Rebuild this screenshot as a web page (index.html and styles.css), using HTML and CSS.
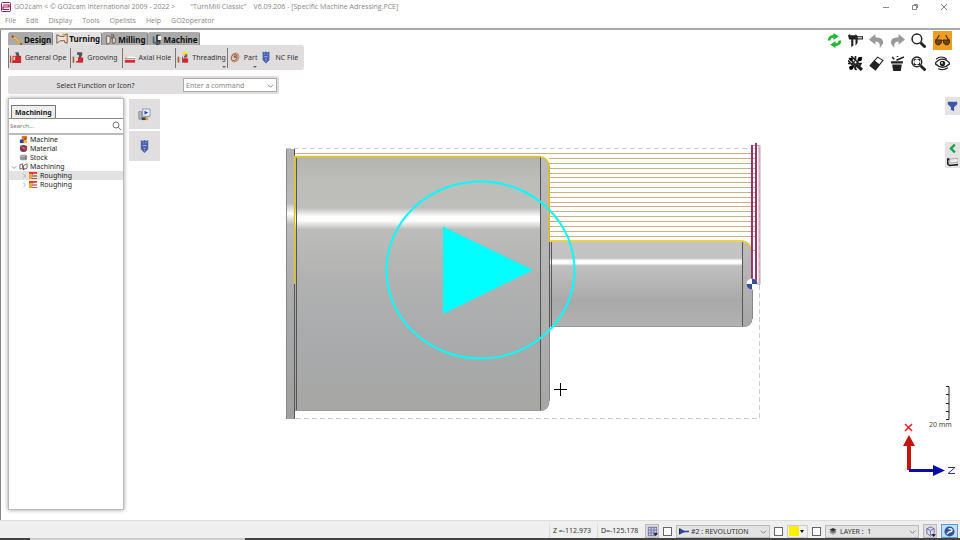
FILE: index.html
```html
<!DOCTYPE html>
<html lang="en">
<head>
<meta charset="utf-8">
<meta name="viewport" content="width=device-width, initial-scale=1">
<title>GO2cam</title>
<link rel="stylesheet" href="styles.css">
</head>
<body>

<!-- icon sprite -->
<svg class="sprite" aria-hidden="true">
  <symbol id="i-lathe" viewBox="0 0 14 14"><path fill="#d9b79c" d="M0 6h4v7H0z"/><path fill="#8b2f22" d="M0 5h1v8H0z"/><path fill="#d8242f" d="M3 5h10v8H3z"/><path fill="#f5d6c8" d="M4 6h2v4H4z"/><path fill="#555" d="M6 1h4l1 5H8z"/><path fill="#9c1c24" d="M2 12h11v1H2z"/></symbol>
  <symbol id="i-groove" viewBox="0 0 14 14"><path fill="#d9b79c" d="M0 6h4v7H0z"/><path fill="#7c4a3a" d="M1 6h1v7H1z"/><path fill="#d8242f" d="M5 7h8v6H5z"/><path fill="#f7e9e2" d="M4 7h3v4H4z"/><path fill="#555" d="M6 1h6v3l-2 4H8V4H6z"/></symbol>
  <symbol id="i-axial" viewBox="0 0 14 14"><path fill="#f2cdbd" d="M1 4h4v4H1z"/><path fill="#fff" d="M4 6h9v3H4z"/><path fill="#8d6e66" d="M1 8h12v1H1z"/><path fill="#d8242f" d="M1 10h12v3H1z"/></symbol>
  <symbol id="i-thread" viewBox="0 0 14 14"><path fill="#d9b79c" d="M0 6h4v7H0z"/><path fill="#7c4a3a" d="M1 6h1v7H1zM6 6h1v7H6zM9 6h1v7H9z"/><path fill="#d8242f" d="M7 8h6v5H7z"/><path fill="#666" d="M8 3h4v4H8z"/><path stroke="#f2e600" stroke-width="1.5" d="M9 0v5M6 2h7"/></symbol>
  <symbol id="i-part" viewBox="0 0 14 14"><ellipse cx="7" cy="7" rx="5" ry="6" fill="#c79a7e" transform="rotate(25 7 7)"/><ellipse cx="6" cy="7" rx="3" ry="4" fill="#e6c8b4" stroke="#8f6650" transform="rotate(25 6 7)"/><circle cx="7" cy="6" r="1.5" fill="#8f6650"/></symbol>
  <symbol id="i-nc" viewBox="0 0 14 14"><path fill="#4a62ae" d="M3 0l2 1 2-1 2 1 2-1v10l-4 4-4-4z"/><path stroke="#aebce6" d="M5 3h1M8 3h1M5 6h4M6 9h2M7 11v1"/></symbol>
  <symbol id="i-pencil" viewBox="0 0 14 14"><path stroke="#e0982e" stroke-width="3" d="M3 3l8 8"/><path stroke="#fbd77d" d="M3 3l7 7"/><path fill="#555" d="M10 12l3 1-1-3z"/><path stroke="#b03a2e" stroke-width="2" d="M1 2l2 2"/></symbol>
  <symbol id="i-turn" viewBox="0 0 14 14"><path fill="#f4e2d4" stroke="#6b4636" d="M1 2l4 2h5V2l3-1v11l-3-1V9H5l-4 3z"/><path stroke="#d9b12b" stroke-width="2" d="M8 1l3 3"/></symbol>
  <symbol id="i-mill" viewBox="0 0 14 14"><path fill="#f4ece4" stroke="#5c514c" d="M2 2l4 1v7l-4 2zM9 4l3 1v5l-3 1z"/><path stroke="#5c514c" d="M8 0v6M10 0v4"/></symbol>
  <symbol id="i-machine" viewBox="0 0 14 14"><path fill="#333" d="M6 1h5v10l-3 2H6z"/><path fill="#eee" d="M8 2h4v5H8z"/><path fill="#567" d="M2 3h2v8H2zM4 9h6v3H4z"/></symbol>
  <symbol id="i-refresh" viewBox="0 0 14 14"><path fill="none" stroke="#20b832" stroke-width="2.500" d="M2 7q0-4 5-4M12 7q0 4-5 4"/><path fill="#20b832" d="M6 0l5 3-5 3.500zM8 14l-5-3 5-3.500z"/></symbol>
  <symbol id="i-caliper" viewBox="0 0 14 14"><path fill="#222" d="M0 2l2-1v1h5V1l2 2h5v3H9v3L7 12V6H5v6L3 13V6H1z"/><path stroke="#fff" d="M9 4.500h4"/></symbol>
  <symbol id="i-undo" viewBox="0 0 14 14"><path fill="#999" d="M0 6l6-5v3q8 0 7 6l-3 4q1-6-4-6v3z"/></symbol>
  <symbol id="i-redo" viewBox="0 0 14 14"><path fill="#999" d="M14 6L8 1v3Q0 4 1 10l3 4q-1-6 4-6v3z"/></symbol>
  <symbol id="i-zoom" viewBox="0 0 14 14"><circle cx="5.5" cy="5.5" r="4.5" fill="#fff" stroke="#222" stroke-width="1.4"/><path stroke="#222" stroke-width="2.6" d="M9 9l4.500 4.500"/></symbol>
  <symbol id="i-fit" viewBox="0 0 14 14"><circle cx="5.500" cy="5.500" r="4.500" fill="#fff" stroke="#222" stroke-width="1.400"/><path fill="none" stroke="#222" d="M3 5V3h2M6 3h2v2M8 6v2H6M5 8H3V6"/><path stroke="#222" stroke-width="2.600" d="M9 9l4.500 4.500"/></symbol>
  <symbol id="i-glasses" viewBox="0 0 14 14"><path fill="none" stroke="#4a2a00" d="M1 7l3-5M13 7l-3-5M5 7h4"/><path fill="#70480c" stroke="#4a2a00" d="M0 6.500h6V9L4 11H2L.5 9zM8 6.500h6L13.500 9 12 11h-2L8 9z"/></symbol>
  <symbol id="i-tools" viewBox="0 0 14 14"><path fill="none" stroke="#222" stroke-width="1.500" d="M1 2l11 11M13 1L2 12M7 0v13M0 7h13M3 0l9 9M0 4l8 9"/><circle cx="3" cy="3" r="1.500"/><circle cx="11" cy="3" r="2"/><circle cx="3" cy="11" r="2"/><path stroke="#222" stroke-width="3" d="M8 8l5 5"/><circle cx="7" cy="6" r="1.500" fill="#fff" stroke="#222"/></symbol>
  <symbol id="i-eraser" viewBox="0 0 14 14"><path fill="#fff" stroke="#222" d="M1 9l7-8 5 3-7 9z"/><path fill="#222" d="M1 9l4-5 5 4-4 5z"/></symbol>
  <symbol id="i-magic" viewBox="0 0 14 14"><path fill="#222" d="M1 5h11v2H1zM2 8h9l-1 6H3z"/><path stroke="#222" stroke-width="1.500" d="M6 4l7-3M2 1l2 2M7 0v1"/></symbol>
  <symbol id="i-eye" viewBox="0 0 14 14"><path fill="#fff" stroke="#222" stroke-width="1.200" d="M0 7q7-8 14 0-7 7-14 0z"/><circle cx="7" cy="7" r="2.500" fill="#222"/><circle cx="6.500" cy="6.500" r=".8" fill="#fff"/><path fill="none" stroke="#222" d="M1 3q5-4 10 0M3 12q5 2 9-1"/></symbol>
  <symbol id="i-search" viewBox="0 0 10 10"><circle cx="4" cy="4" r="3" fill="none" stroke="#777"/><path stroke="#777" d="M6 6l3 3"/></symbol>
  <symbol id="i-t-machine" viewBox="0 0 10 10"><path fill="#d87a1c" d="M3 1h6v4H3z"/><path fill="#333f8c" d="M1 5h5v4H1z"/><path fill="#c9302c" d="M6 3h2v3H6z"/><path fill="#f3bd2a" d="M5 6h4v3H5z"/></symbol>
  <symbol id="i-t-material" viewBox="0 0 10 10"><circle cx="5" cy="5" r="4" fill="#4c4c5c"/><path fill="#d22b35" d="M1 2h4L4 6zM5 6l4-5v4L7 9z"/><path fill="#ddd" d="M4 4h2v1H4z"/></symbol>
  <symbol id="i-t-stock" viewBox="0 0 10 10"><rect x="1" y="2" width="8" height="6" rx="2" fill="#999"/><path fill="#c8c8c8" d="M2 3h6v1H2z"/><path fill="#666" d="M7 3h1v4H7z"/></symbol>
  <symbol id="i-t-machining" viewBox="0 0 10 10"><path fill="#fff" stroke="#6d5f5f" d="M1 3l3-1v5l-3 1zM5 4l4-2v5L5 8z"/><path fill="#a33" d="M4 7h2v2H4z"/></symbol>
  <symbol id="i-t-rough" viewBox="0 0 10 10"><path fill="#d8343a" d="M0 1h9v2H5L3 5H0z"/><path fill="#f0a53a" d="M0 3h3l2 2-2 4H0z"/><path fill="#9a2b20" d="M4 5h5v1H4zM3 8h6v1H3z"/></symbol>
  <symbol id="i-sim" viewBox="0 0 14 14"><path fill="#bbb" stroke="#888" d="M1 4h3v8H1z"/><path fill="#e9edfb" stroke="#8592ba" d="M5 1h8v8H5z"/><path fill="#2b409c" d="M7 3l4 2-4 2z"/><path fill="#444" d="M4 10h5v3H4z"/><path fill="#dda23b" d="M8 10h3v3H8z"/></symbol>
  <symbol id="i-chev" viewBox="0 0 8 8"><path fill="none" stroke="#777" d="M1 3l3 3 3-3"/></symbol>
  <symbol id="i-right" viewBox="0 0 8 8"><path fill="none" stroke="#999" d="M3 1l3 3-3 3"/></symbol>
  <symbol id="i-funnel" viewBox="0 0 14 14"><path fill="#4054a4" d="M1 1h12v3L9 8v5L5 11V8L1 4z"/></symbol>
  <symbol id="i-back" viewBox="0 0 14 14"><path fill="none" stroke="#17a34a" stroke-width="3" d="M10 2L5 7l5 5"/></symbol>
  <symbol id="i-block" viewBox="0 0 14 14"><path fill="#eee" stroke="#999" d="M3 4l11-1v5L4 9z"/><path fill="none" stroke="#222" stroke-width="2" d="M3 4H1v6l2 2 11-1"/></symbol>
  <symbol id="i-grid" viewBox="0 0 12 12"><path fill="#c9c9dc" d="M1 1h10v10H1z"/><path stroke="#7777aa" d="M1 1.500h10M1 4.500h10M1 7.500h10M1 10.500h8M1.500 1v10M4.500 1v10M7.500 1v10M10.500 1v8"/><path fill="#111" d="M7 8h5l-2.500 3z"/></symbol>
  <symbol id="i-plane" viewBox="0 0 12 10"><path fill="#223" d="M0 1l3 1v5L0 9z"/><path fill="#284c9c" d="M1 2l6 2h5v2H7L1 8z"/></symbol>
  <symbol id="i-layer" viewBox="0 0 10 10"><path fill="#aaa" d="M1 6l4-2 4 2-4 3z"/><path fill="#777" d="M1 5l4-2 4 2-4 2z"/><path fill="#333" d="M1 3l4-2 4 2-4 2z"/></symbol>
  <symbol id="i-cube" viewBox="0 0 12 12"><path fill="#dcdcf0" stroke="#6969a6" d="M2 3l4-2 4 2v5l-4 3-4-3zM2 3l4 2 4-2M6 5v5"/><path fill="#111" d="M7 9h5l-2.500 3z"/></symbol>
  <symbol id="i-help" viewBox="0 0 12 12"><circle cx="6" cy="6" r="5.500" fill="#31529c"/><path fill="none" stroke="#fff" stroke-width="1.500" d="M3 9l3-3M5 3h2q3 1 1 3L5 7"/></symbol>
</svg>

<header>
  <div class="titlebar">
    <svg class="logo" viewBox="0 0 10 10"><rect x=".5" y=".5" width="9" height="9" rx="1" fill="#fff" stroke="#9c1c46"/><path fill="none" stroke="#9c1c46" stroke-width="1.200" d="M2 3h6v2H2v2.500h6"/></svg>
    <span class="app">GO2cam &lt; © GO2cam International 2009 - 2022 &gt;</span>
    <span class="config">"TurnMill Classic"</span>
    <span>V6.09.206 - [Specific Machine Adressing.PCE]</span>
    <div class="window-buttons">
      <button aria-label="Minimize"><svg viewBox="0 0 8 8"><path stroke="#888" d="M1 4.500h6"/></svg></button>
      <button aria-label="Restore"><svg viewBox="0 0 8 8"><path fill="none" stroke="#888" d="M1.500 2.500h4v4h-4zM3 1.500h3.500V5"/></svg></button>
      <button aria-label="Close"><svg viewBox="0 0 8 8"><path stroke="#888" d="M1 1l6 6M7 1L1 7"/></svg></button>
    </div>
  </div>
  <nav class="menu">
    <a href="#">File</a><a href="#">Edit</a><a href="#">Display</a><a href="#">Tools</a><a href="#">Opelists</a><a href="#">Help</a><a href="#">GO2operator</a>
  </nav>
</header>

<main>
  <!-- part view -->
  <svg class="viewport" viewBox="0 30 960 490" role="img" aria-label="Turned part">
    <defs>
      <linearGradient id="big" x1="0" y1="0" x2="0" y2="1">
        <stop offset="0" stop-color="#b3b3b0"/><stop offset=".1" stop-color="#bdbdba"/><stop offset=".2" stop-color="#bebebc"/>
        <stop offset=".235" stop-color="#fff"/><stop offset=".25" stop-color="#fff"/><stop offset=".285" stop-color="#bcbcba"/>
        <stop offset=".5" stop-color="#b1b1b1"/><stop offset=".75" stop-color="#a8aaab"/><stop offset="1" stop-color="#a7a7a4"/>
      </linearGradient>
      <linearGradient id="edge" x1="0" y1="0" x2="0" y2="1">
        <stop offset="0" stop-color="#b0b0b0"/><stop offset=".2" stop-color="#bababa"/><stop offset=".24" stop-color="#fff"/>
        <stop offset=".28" stop-color="#b9b9b9"/><stop offset=".6" stop-color="#a9a9a9"/><stop offset="1" stop-color="#a0a0a0"/>
      </linearGradient>
      <linearGradient id="small" x1="0" y1="0" x2="0" y2="1">
        <stop offset="0" stop-color="#c4c4c4"/><stop offset=".19" stop-color="#c2c2c2"/><stop offset=".22" stop-color="#fff"/>
        <stop offset=".25" stop-color="#fff"/><stop offset=".28" stop-color="#c0c0c0"/><stop offset=".7" stop-color="#a9a9a9"/><stop offset="1" stop-color="#b2b2b2"/>
      </linearGradient>
      <linearGradient id="side" x1="0" y1="0" x2="0" y2="1">
        <stop offset="0" stop-color="#bcbcbc"/><stop offset=".5" stop-color="#b2b2b2"/><stop offset="1" stop-color="#a6a6a6"/>
      </linearGradient>
    </defs>
    <path class="stock" d="M286 148.500h474M759.500 149v269.500H295"/>
    <path class="passes" d="M295 153.500h461M549 158.500h207M549 163.500h207M549 168.500h207M549 173.500h207M549 177.500h207M549 182.500h207M549 187.500h207M549 192.500h207M549 197.500h207M549 202.500h207M549 206.500h207M549 211.500h207M549 216.500h207M549 221.500h207M549 226.500h207M549 231.500h207M549 236.500h207M549 250.500h206"/>
    <path fill="url(#edge)" d="M286 149h9v270h-9z"/>
    <path fill="url(#big)" d="M295 157h245v254H295z"/>
    <path fill="url(#side)" d="M540 157q9 1 9 10v234q0 9-9 10z"/>
    <path fill="url(#small)" d="M550 242h193v85H550z"/>
    <path fill="url(#side)" d="M743 242q9 2 9 10v66q0 8-9 9z"/>
    <path fill="none" stroke="#888" d="M286.500 149v270M549.500 166v235M752.500 252v67"/>
    <path fill="none" stroke="#555" d="M294.500 149v270M296.500 158v253M540.500 157v254M549.500 242v85M551.500 242v85M742.500 242v85"/>
    <path fill="none" stroke="#999" d="M296 410.500h244q9 0 9-9M552 326.500h191q9 0 9-8"/>
    <path fill="none" stroke="#e3c51b" stroke-width="1.500" d="M294.500 284V156.500H540q9 2 9 10v74.500h194q8 2 9 11"/>
    <path fill="none" stroke="#c7a0ae" d="M752 145.500h8v139h-8M759 145v140"/>
    <path stroke="#963668" stroke-width="2" d="M752 145v135M756 143v140"/>
    <circle cx="752" cy="284" r="5.500" fill="#fff"/>
    <path fill="#3b4d95" d="M752 284h5.500a5.500 5.500 0 0 1-5.500 5.500zM752 284h-5.500a5.500 5.500 0 0 1 5.500-5.500z" transform="rotate(90 752 284)"/>
    <ellipse cx="480.500" cy="270" rx="94" ry="88.500" fill="none" stroke="#0ff" stroke-width="2"/>
    <path fill="#0ff" d="M443 226.500L533 270l-90 44z"/>
    <path stroke="#000" d="M554 389.500h13M560.500 383v13"/>
    <path fill="none" stroke="#222" d="M946 386.500h3v33h-3M946 394.500h3M946 403.500h3M946 411.500h3"/>
    <text class="scale" x="929" y="427">20 mm</text>
    <path fill="#c4150c" d="M907 470v-24h-4l6-11 6 11h-4v24z"/>
    <path fill="#0b0ba8" d="M909 469h24v-4l12 5.500-12 5.500v-4h-24z"/>
    <path fill="none" stroke="#d22" stroke-width="1.500" d="M905 424l7 7M912 424l-7 7"/>
    <path fill="none" stroke="#33a" d="M948 467.500h7l-7 6h7"/>
  </svg>

  <section class="left">
    <div class="tabs">
      <button><svg><use href="#i-pencil"/></svg>Design</button>
      <button class="active"><svg><use href="#i-turn"/></svg>Turning</button>
      <button><svg><use href="#i-mill"/></svg>Milling</button>
      <button><svg><use href="#i-machine"/></svg>Machine</button>
    </div>
    <div class="ribbon">
      <button><svg><use href="#i-lathe"/></svg>General Ope</button>
      <button><svg><use href="#i-groove"/></svg>Grooving</button>
      <button><svg><use href="#i-axial"/></svg>Axial Hole</button>
      <button class="more"><svg><use href="#i-thread"/></svg>Threading</button>
      <button class="more"><svg><use href="#i-part"/></svg>Part</button>
      <button><svg><use href="#i-nc"/></svg>NC File</button>
    </div>
    <div class="prompt">
      <label for="command">Select Function or Icon?</label>
      <div class="combo"><select id="command"><option>Enter a command</option></select><svg><use href="#i-chev"/></svg></div>
    </div>
    <div class="columns">
      <aside class="panel">
        <div class="panel-head"><button>Machining</button></div>
        <div class="search"><input type="text" placeholder="Search..." aria-label="Search"><svg><use href="#i-search"/></svg></div>
        <ul class="tree">
          <li><svg><use href="#i-t-machine"/></svg>Machine</li>
          <li><svg><use href="#i-t-material"/></svg>Material</li>
          <li><svg><use href="#i-t-stock"/></svg>Stock</li>
          <li class="open"><svg class="arrow"><use href="#i-chev"/></svg><svg><use href="#i-t-machining"/></svg>Machining</li>
          <li class="child selected"><svg class="arrow"><use href="#i-right"/></svg><svg><use href="#i-t-rough"/></svg>Roughing</li>
          <li class="child"><svg class="arrow"><use href="#i-right"/></svg><svg><use href="#i-t-rough"/></svg>Roughing</li>
        </ul>
      </aside>
      <div class="side-buttons">
        <button aria-label="Simulation"><svg><use href="#i-sim"/></svg></button>
        <button aria-label="NC File"><svg><use href="#i-nc"/></svg></button>
      </div>
    </div>
  </section>

  <section class="right">
    <div class="view-tools">
      <button aria-label="Refresh"><svg><use href="#i-refresh"/></svg></button>
      <button aria-label="Measure"><svg><use href="#i-caliper"/></svg></button>
      <button aria-label="Undo"><svg><use href="#i-undo"/></svg></button>
      <button aria-label="Redo"><svg><use href="#i-redo"/></svg></button>
      <button aria-label="Zoom"><svg><use href="#i-zoom"/></svg></button>
      <button class="on" aria-label="View"><svg><use href="#i-glasses"/></svg></button>
      <button class="second" aria-label="Tools"><svg><use href="#i-tools"/></svg></button>
      <button aria-label="Erase"><svg><use href="#i-eraser"/></svg></button>
      <button aria-label="Magic"><svg><use href="#i-magic"/></svg></button>
      <button aria-label="Zoom all"><svg><use href="#i-fit"/></svg></button>
      <button class="last" aria-label="Show"><svg><use href="#i-eye"/></svg></button>
    </div>
    <div class="dock">
      <button class="filter" aria-label="Filter"><svg><use href="#i-funnel"/></svg></button>
      <button aria-label="Back"><svg><use href="#i-back"/></svg></button>
      <button aria-label="Stock"><svg><use href="#i-block"/></svg></button>
    </div>
  </section>
</main>

<footer>
  <span class="coord">Z =-112.973</span>
  <span class="coord">D=-125.178</span>
  <button class="tool" aria-label="Grid"><svg><use href="#i-grid"/></svg></button>
  <input type="checkbox" aria-label="Lock plane">
  <div class="drop"><svg class="pic"><use href="#i-plane"/></svg><select aria-label="Plane"><option>#2 : REVOLUTION</option></select><svg><use href="#i-chev"/></svg></div>
  <input type="checkbox" aria-label="Lock color">
  <button class="color" aria-label="Color"><i></i></button>
  <input type="checkbox" aria-label="Lock layer">
  <div class="drop"><svg class="pic"><use href="#i-layer"/></svg><select aria-label="Layer"><option>LAYER : &nbsp;1</option></select><svg><use href="#i-chev"/></svg></div>
  <button class="tool" aria-label="Shading"><svg><use href="#i-cube"/></svg></button>
  <button class="help" aria-label="Help"><svg><use href="#i-help"/></svg></button>
</footer>
<div class="taskbar"></div>

</body>
</html>
```
FILE: styles.css
```css
* {
  box-sizing: border-box;
}

body {
  margin: 0;
  height: 100vh;
  display: flex;
  flex-direction: column;
  overflow: hidden;
  background: #fff;
  color: #333;
  font: 7px "Noto Sans", sans-serif;
}

button, input, select {
  font: inherit;
  color: inherit;
  margin: 0;
  padding: 0;
  border: 0;
  background: none;
}

button {
  display: flex;
  align-items: center;
  justify-content: center;
}

svg {
  flex: none;
}

.sprite {
  position: absolute;
  width: 0;
  height: 0;
}

/* title and menu */
header {
  border-bottom: 2px solid #aaa;
  color: #888;
  font: 7px/14px "Open Sans", sans-serif;
}

.titlebar {
  display: flex;
  align-items: center;
  height: 14px;
  padding-left: 1px;
}

.logo {
  width: 10px;
  height: 10px;
  margin-right: 3px;
}

.app {
  margin-right: 15px;
}

.config {
  margin-right: 7px;
}

.window-buttons {
  display: flex;
  gap: 21px;
  margin-left: auto;
  padding-right: 12px;
}

.window-buttons svg {
  display: block;
  width: 8px;
  height: 8px;
}

.menu {
  display: flex;
  gap: 10px;
  padding-left: 5px;
  height: 14px;
}

.menu a {
  color: inherit;
  text-decoration: none;
}

/* work area */
main {
  position: relative;
  flex: 1;
  min-height: 0;
  display: flex;
  justify-content: space-between;
  border-left: 1px solid #888;
}

.viewport {
  position: absolute;
  left: -1px;
  top: 0;
  width: calc(100% + 1px);
  height: 100%;
}

.scale {
  font-size: 7px;
  fill: #444;
}

.stock {
  fill: none;
  stroke: #ccc;
  stroke-dasharray: 5 3;
}

.passes {
  stroke: #cdae82;
}

.left {
  position: relative;
  display: flex;
  flex-direction: column;
  align-items: flex-start;
  padding: 2px 0 10px 7px;
}

.tabs {
  display: flex;
  font-weight: bold;
}

.tabs button {
  height: 13px;
  gap: 1px;
  padding: 2px 1px 0 3px;
  background: #aaa;
  border-right: 1px solid #888;
  border-radius: 2px 2px 0 0;
  font-size: 8px;
  color: #111;
}

.tabs .active {
  padding-top: 0;
  background: #e3e1e1;
}

.tabs svg {
  width: 12px;
  height: 12px;
}

.ribbon {
  display: flex;
  align-items: center;
  height: 25px;
  padding-right: 2px;
  background: #dfdddd;
  border-radius: 0 3px 3px 0;
  margin-bottom: 6px;
}

.ribbon button {
  position: relative;
  height: 20px;
  gap: 3px;
  padding: 0 4px 0 1px;
  border-left: 1px solid #777;
}

.ribbon .more {
  padding-right: 1px;
}

.ribbon button:last-child {
  border-left-color: transparent;
}

.ribbon svg {
  width: 12px;
  height: 13px;
}

.ribbon .more::after {
  content: "";
  position: absolute;
  right: 1px;
  bottom: 0;
  border: 2px solid transparent;
  border-top-color: #666;
  border-bottom: 0;
}

.prompt {
  display: flex;
  align-items: center;
  height: 18px;
  width: 271px;
  padding-right: 2px;
  margin-bottom: 4px;
  background: #dfdddd;
  border-radius: 2px;
}

.prompt label {
  flex: 1;
  text-align: center;
}

.combo {
  display: flex;
  align-items: center;
  width: 94px;
  height: 14px;
  padding: 0 2px;
  background: #fff;
  border: 1px solid #aaa;
  color: #888;
}

.combo svg, .drop svg {
  width: 7px;
  height: 7px;
}

select {
  appearance: none;
  flex: 1;
  min-width: 0;
}

.columns {
  flex: 1;
  display: flex;
  align-items: flex-start;
  gap: 5px;
}

.panel {
  align-self: stretch;
  width: 116px;
  background: #fff;
  border: 1px solid #bbb;
  box-shadow: 0 0 4px #999;
}

.panel-head {
  display: flex;
  padding: 6px 0 0 2px;
  border-bottom: 1px solid #888;
}

.panel-head button {
  height: 13px;
  padding: 0 3px;
  background: #eee;
  border: 1px solid #777;
  border-bottom: 0;
  font-weight: bold;
  color: #222;
}

.search {
  display: flex;
  align-items: center;
  height: 16px;
  padding: 0 1px;
  border-bottom: 2px solid #bbb;
}

.search input {
  flex: 1;
  min-width: 0;
  font-size: 6px;
}

.search svg {
  width: 10px;
  height: 10px;
}

.tree {
  list-style: none;
  margin: 0;
  padding: 0;
  color: #222;
}

.tree li {
  display: flex;
  align-items: center;
  gap: 2px;
  height: 9px;
  padding-left: 10px;
}

.tree svg {
  width: 9px;
  height: 9px;
}

.tree .arrow {
  width: 6px;
  height: 6px;
}

.tree .open {
  padding-left: 2px;
}

.tree .child {
  padding-left: 12px;
}

.tree .selected {
  background: #e3e3e3;
}

.side-buttons {
  display: grid;
  gap: 2px;
  padding-top: 1px;
}

.side-buttons button {
  width: 31px;
  height: 30px;
  background: #e0dede;
}

.side-buttons svg {
  width: 13px;
  height: 13px;
}

.right {
  position: relative;
  display: flex;
  flex-direction: column;
  align-items: flex-end;
}

.view-tools {
  display: grid;
  grid-template-columns: repeat(5, 19px) 22px;
  gap: 4px 2px;
  padding: 1px 8px 0 0;
}

.view-tools button {
  width: 19px;
  height: 19px;
}

.view-tools .second {
  grid-column: 2;
}

.view-tools .on, .view-tools .last {
  justify-self: end;
}

.view-tools .on {
  background: #ec9d22;
}

.view-tools svg {
  width: 15px;
  height: 15px;
}

.dock {
  display: grid;
  padding-top: 24px;
}

.dock button {
  width: 15px;
  height: 13px;
  background: #e3e3e3;
}

.dock .filter {
  height: 18px;
  margin-bottom: 27px;
}

.dock svg {
  width: 11px;
  height: 11px;
}

/* status bar */
footer {
  display: flex;
  align-items: center;
  justify-content: flex-end;
  gap: 4px;
  height: 18px;
  padding: 3px 2px 0 0;
  background: #efefef;
  border-top: 1px solid #ddd;
}

.coord {
  min-width: 44px;
  padding-left: 3px;
  border-left: 1px solid #ddd;
  line-height: 14px;
}

.tool {
  width: 14px;
  height: 14px;
  background: #ddd;
  border: 1px solid #bbb;
}

.tool svg, .help svg {
  width: 11px;
  height: 11px;
}

footer input {
  appearance: none;
  width: 9px;
  height: 9px;
  background: #fff;
  border: 1px solid #666;
}

.drop {
  display: flex;
  align-items: center;
  gap: 2px;
  width: 94px;
  height: 13px;
  padding: 0 2px;
  background: #e3e3e3;
  border: 1px solid #bbb;
}

.drop .pic {
  width: 10px;
  height: 9px;
}

.color {
  width: 21px;
  height: 13px;
  justify-content: space-between;
  padding: 0 3px 0 1px;
  border: 1px solid #ccc;
}

.color i {
  width: 10px;
  height: 10px;
  background: #ffee00;
}

.color::after {
  content: "";
  border: 2px solid transparent;
  border-top: 3px solid #111;
  border-bottom: 0;
}

.help {
  width: 17px;
  height: 14px;
  background: #c4dff4;
  border: 1px solid #5a9ad0;
}

.taskbar {
  height: 2px;
  background: linear-gradient(90deg, #444 30px, #ccc 30px, #ccc 245px, #444 245px);
}
```
